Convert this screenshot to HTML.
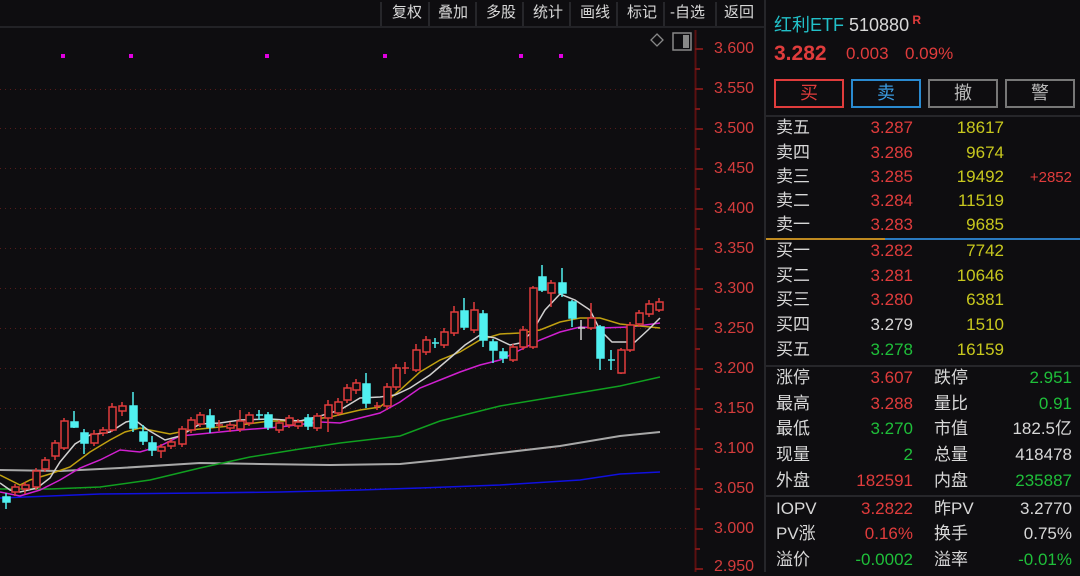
<!DOCTYPE html>
<html><head><meta charset="utf-8"><style>
*{margin:0;padding:0;box-sizing:border-box}
body{width:1080px;height:572px;background:#0e0d10;overflow:hidden;position:relative;font-family:"Liberation Sans","Noto Sans CJK SC",sans-serif;color:#d8d8d8}
.tb{position:absolute;top:0;left:0;width:764px;height:28px;border-bottom:2px solid #222226}
.tb span{position:absolute;top:4px;font-size:15px;line-height:18px;color:#d8d8d8}
.tb i{position:absolute;top:2px;width:2px;height:24px;background:#26262a}
.ax{position:absolute;left:714px;font-size:16px;line-height:18px;color:#d43c3c}
.rp{position:absolute;left:764px;top:0;width:316px;height:572px;border-left:2px solid #26262a}
.t{position:absolute;font-size:17px;line-height:20px;white-space:nowrap}
.r{color:#e03c3c}.g{color:#1fbf3a}.y{color:#c8c81e}.w{color:#d8d8d8}
.btn{position:absolute;top:79px;width:70px;height:29px;border:2px solid;font-size:18px;text-align:center;line-height:25px}
.hl{position:absolute;left:0;width:316px;height:2px;background:#26262a}
.ra{text-align:right}
</style></head><body>
<div class="tb">
<i style="left:380px"></i>
<span style="left:392px">复权</span><i style="left:428px"></i>
<span style="left:438px">叠加</span><i style="left:475px"></i>
<span style="left:486px">多股</span><i style="left:522px"></i>
<span style="left:533px">统计</span><i style="left:569px"></i>
<span style="left:580px">画线</span><i style="left:616px"></i>
<span style="left:627px">标记</span><i style="left:663px"></i>
<span style="left:670px">-自选</span><i style="left:715px"></i>
<span style="left:724px">返回</span>
</div>
<svg style="position:absolute;left:0;top:0" width="764" height="572">
<g stroke="#5a1a1a" stroke-width="1" stroke-dasharray="1,4">
<line x1="0" y1="89.5" x2="690" y2="89.5"/><line x1="0" y1="128.5" x2="690" y2="128.5"/><line x1="0" y1="168.5" x2="690" y2="168.5"/><line x1="0" y1="208.5" x2="690" y2="208.5"/><line x1="0" y1="248.5" x2="690" y2="248.5"/><line x1="0" y1="288.5" x2="690" y2="288.5"/><line x1="0" y1="328.5" x2="690" y2="328.5"/><line x1="0" y1="368.5" x2="690" y2="368.5"/><line x1="0" y1="408.5" x2="690" y2="408.5"/><line x1="0" y1="448.5" x2="690" y2="448.5"/><line x1="0" y1="488.5" x2="690" y2="488.5"/><line x1="0" y1="528.5" x2="690" y2="528.5"/>
</g>
<line x1="695.5" y1="30" x2="695.5" y2="572" stroke="#5a1010" stroke-width="2"/>
<g stroke="#7a1818" stroke-width="2">
<line x1="695" y1="49" x2="703" y2="49"/><line x1="695" y1="89" x2="703" y2="89"/><line x1="695" y1="129" x2="703" y2="129"/><line x1="695" y1="169" x2="703" y2="169"/><line x1="695" y1="209" x2="703" y2="209"/><line x1="695" y1="249" x2="703" y2="249"/><line x1="695" y1="289" x2="703" y2="289"/><line x1="695" y1="329" x2="703" y2="329"/><line x1="695" y1="369" x2="703" y2="369"/><line x1="695" y1="409" x2="703" y2="409"/><line x1="695" y1="449" x2="703" y2="449"/><line x1="695" y1="489" x2="703" y2="489"/><line x1="695" y1="529" x2="703" y2="529"/><line x1="695" y1="569" x2="703" y2="569"/>
<line x1="695" y1="69" x2="700" y2="69"/><line x1="695" y1="109" x2="700" y2="109"/><line x1="695" y1="149" x2="700" y2="149"/><line x1="695" y1="189" x2="700" y2="189"/><line x1="695" y1="229" x2="700" y2="229"/><line x1="695" y1="269" x2="700" y2="269"/><line x1="695" y1="309" x2="700" y2="309"/><line x1="695" y1="349" x2="700" y2="349"/><line x1="695" y1="389" x2="700" y2="389"/><line x1="695" y1="429" x2="700" y2="429"/><line x1="695" y1="469" x2="700" y2="469"/><line x1="695" y1="509" x2="700" y2="509"/><line x1="695" y1="549" x2="700" y2="549"/>
</g>
<g fill="#e000e0"><rect x="61" y="54" width="4" height="4"/><rect x="129" y="54" width="4" height="4"/><rect x="265" y="54" width="4" height="4"/><rect x="383" y="54" width="4" height="4"/><rect x="519" y="54" width="4" height="4"/><rect x="559" y="54" width="4" height="4"/></g>
<path d="M657 34 L663 40 L657 46 L651 40 Z" fill="none" stroke="#888" stroke-width="1.3"/>
<rect x="673" y="33" width="18" height="17" fill="none" stroke="#888" stroke-width="1.5"/><rect x="683" y="35" width="6" height="13" fill="#888"/>
<g fill="none" stroke-width="1.5">
<polyline stroke="#1010e0" points="0,498 50,496 100,494 200,493 280,492 360,490 420,488 500,485 580,480 620,474 660,472"/>
<polyline stroke="#a8a8a8" stroke-width="2" points="0,470 60,471 120,468 200,463 260,464 330,465 400,464 440,460 500,453 560,446 620,436 660,432"/>
<polyline stroke="#10a020" points="0,489 50,489 100,487 150,480 200,468 250,457 300,449 340,443 400,436 440,421 500,406 560,396 620,386 660,377"/>
<polyline stroke="#d020d0" points="0,492 20,496 40,490 60,480 80,468 100,460 120,450 140,452 160,446 180,436 200,434 240,430 280,427 320,422 340,423 360,418 380,413 400,402 420,388 440,380 460,372 480,365 500,360 520,350 540,340 560,332 580,327 600,328 630,327 660,323"/>
<polyline stroke="#c0a010" points="0,475 20,485 30,480 50,474 70,467 90,452 110,440 125,432 140,428 160,432 170,434 190,430 210,428 240,425 270,421 300,421 330,417 360,410 380,407 400,390 420,372 440,360 460,352 480,340 500,334 520,333 540,330 560,322 580,318 600,318 620,324 640,326 660,328"/>
<polyline stroke="#d0d0d0" points="0,483 10,490 20,492 37,488 50,478 60,462 75,444 90,435 110,432 126,422 135,420 148,430 165,440 180,436 200,424 220,423 240,420 270,419 300,421 320,416 340,410 360,398 380,397 395,395 410,388 430,375 450,358 465,345 480,335 495,338 510,345 520,343 532,332 545,310 560,294 575,300 590,310 600,330 612,342 635,342 648,330 660,318"/>
</g>
<g stroke="#e03c3c" stroke-width="1.5" fill="#0e0d10">
<line x1="15" y1="484" x2="15" y2="496"/><rect x="12" y="487" width="7" height="5"/>
<line x1="25" y1="482" x2="25" y2="494"/><rect x="22" y="485" width="7" height="4"/>
<line x1="36" y1="468" x2="36" y2="490"/><rect x="33" y="471" width="7" height="16"/>
<line x1="45" y1="457" x2="45" y2="472"/><rect x="42" y="460" width="7" height="9"/>
<line x1="55" y1="440" x2="55" y2="460"/><rect x="52" y="443" width="7" height="13"/>
<line x1="64" y1="418" x2="64" y2="450"/><rect x="61" y="421" width="7" height="27"/>
<line x1="94" y1="430" x2="94" y2="446"/><rect x="91" y="434" width="7" height="9"/>
<line x1="103" y1="427" x2="103" y2="436"/><rect x="100" y="430" width="7" height="3"/>
<line x1="112" y1="403" x2="112" y2="432"/><rect x="109" y="407" width="7" height="23"/>
<line x1="122" y1="402" x2="122" y2="416"/><rect x="119" y="406" width="7" height="5"/>
<line x1="161" y1="444" x2="161" y2="458"/><rect x="158" y="447" width="7" height="4"/>
<line x1="171" y1="439" x2="171" y2="449"/><rect x="168" y="442" width="7" height="4"/>
<line x1="182" y1="426" x2="182" y2="447"/><rect x="179" y="429" width="7" height="15"/>
<line x1="191" y1="417" x2="191" y2="433"/><rect x="188" y="420" width="7" height="10"/>
<line x1="200" y1="412" x2="200" y2="427"/><rect x="197" y="415" width="7" height="9"/>
<line x1="219" y1="420" x2="219" y2="431"/><line x1="216" y1="425" x2="223" y2="425"/>
<line x1="230" y1="422" x2="230" y2="432"/><rect x="227" y="425" width="7" height="3"/>
<line x1="240" y1="410" x2="240" y2="432"/><rect x="237" y="421" width="7" height="8"/>
<line x1="249" y1="412" x2="249" y2="426"/><rect x="246" y="415" width="7" height="8"/>
<line x1="279" y1="420" x2="279" y2="433"/><rect x="276" y="423" width="7" height="7"/>
<line x1="289" y1="415" x2="289" y2="428"/><rect x="286" y="418" width="7" height="7"/>
<line x1="298" y1="419" x2="298" y2="429"/><rect x="295" y="422" width="7" height="4"/>
<line x1="317" y1="413" x2="317" y2="431"/><rect x="314" y="416" width="7" height="12"/>
<line x1="328" y1="400" x2="328" y2="432"/><rect x="325" y="405" width="7" height="13"/>
<line x1="338" y1="398" x2="338" y2="416"/><rect x="335" y="402" width="7" height="11"/>
<line x1="347" y1="384" x2="347" y2="403"/><rect x="344" y="388" width="7" height="12"/>
<line x1="356" y1="379" x2="356" y2="394"/><rect x="353" y="383" width="7" height="7"/>
<line x1="377" y1="402" x2="377" y2="410"/><line x1="374" y1="406" x2="381" y2="406"/>
<line x1="387" y1="383" x2="387" y2="410"/><rect x="384" y="387" width="7" height="19"/>
<line x1="396" y1="364" x2="396" y2="390"/><rect x="393" y="368" width="7" height="19"/>
<line x1="405" y1="362" x2="405" y2="374"/><line x1="402" y1="368" x2="409" y2="368"/>
<line x1="416" y1="344" x2="416" y2="372"/><rect x="413" y="350" width="7" height="20"/>
<line x1="426" y1="336" x2="426" y2="355"/><rect x="423" y="340" width="7" height="12"/>
<line x1="444" y1="328" x2="444" y2="348"/><rect x="441" y="332" width="7" height="13"/>
<line x1="454" y1="306" x2="454" y2="336"/><rect x="451" y="312" width="7" height="21"/>
<line x1="474" y1="302" x2="474" y2="333"/><rect x="471" y="310" width="7" height="20"/>
<line x1="513" y1="344" x2="513" y2="362"/><rect x="510" y="347" width="7" height="13"/>
<line x1="523" y1="326" x2="523" y2="350"/><rect x="520" y="330" width="7" height="17"/>
<line x1="533" y1="286" x2="533" y2="349"/><rect x="530" y="288" width="7" height="59"/>
<line x1="551" y1="280" x2="551" y2="307"/><rect x="548" y="283" width="7" height="10"/>
<line x1="591" y1="303" x2="591" y2="330"/><rect x="588" y="318" width="7" height="10"/>
<line x1="621" y1="348" x2="621" y2="374"/><rect x="618" y="350" width="7" height="23"/>
<line x1="630" y1="322" x2="630" y2="352"/><rect x="627" y="325" width="7" height="25"/>
<line x1="639" y1="310" x2="639" y2="327"/><rect x="636" y="313" width="7" height="11"/>
<line x1="649" y1="300" x2="649" y2="317"/><rect x="646" y="304" width="7" height="10"/>
<line x1="659" y1="298" x2="659" y2="312"/><rect x="656" y="302" width="7" height="8"/>
</g>
<g stroke="#50f0f0" stroke-width="1.5" fill="#50f0f0">
<line x1="6" y1="493" x2="6" y2="509"/><rect x="3" y="497" width="7" height="5"/>
<line x1="74" y1="411" x2="74" y2="428"/><rect x="71" y="422" width="7" height="5"/>
<line x1="84" y1="429" x2="84" y2="454"/><rect x="81" y="433" width="7" height="10"/>
<line x1="133" y1="392" x2="133" y2="432"/><rect x="130" y="406" width="7" height="22"/>
<line x1="143" y1="425" x2="143" y2="445"/><rect x="140" y="432" width="7" height="9"/>
<line x1="152" y1="436" x2="152" y2="456"/><rect x="149" y="443" width="7" height="7"/>
<line x1="210" y1="409" x2="210" y2="433"/><rect x="207" y="416" width="7" height="11"/>
<line x1="259" y1="410" x2="259" y2="420"/><line x1="256" y1="415" x2="263" y2="415"/>
<line x1="268" y1="412" x2="268" y2="430"/><rect x="265" y="415" width="7" height="12"/>
<line x1="308" y1="414" x2="308" y2="430"/><rect x="305" y="418" width="7" height="8"/>
<line x1="366" y1="373" x2="366" y2="408"/><rect x="363" y="384" width="7" height="19"/>
<line x1="435" y1="338" x2="435" y2="348"/><line x1="432" y1="343" x2="439" y2="343"/>
<line x1="464" y1="298" x2="464" y2="330"/><rect x="461" y="311" width="7" height="16"/>
<line x1="483" y1="310" x2="483" y2="347"/><rect x="480" y="314" width="7" height="26"/>
<line x1="493" y1="339" x2="493" y2="363"/><rect x="490" y="342" width="7" height="8"/>
<line x1="503" y1="348" x2="503" y2="363"/><rect x="500" y="352" width="7" height="6"/>
<line x1="542" y1="265" x2="542" y2="292"/><rect x="539" y="277" width="7" height="13"/>
<line x1="562" y1="268" x2="562" y2="297"/><rect x="559" y="283" width="7" height="10"/>
<line x1="572" y1="300" x2="572" y2="327"/><rect x="569" y="302" width="7" height="16"/>
<line x1="581" y1="320" x2="581" y2="340" stroke="#d0d0d0"/><line x1="578" y1="328" x2="585" y2="328" stroke="#d0d0d0"/>
<line x1="600" y1="325" x2="600" y2="370"/><rect x="597" y="327" width="7" height="31"/>
<line x1="611" y1="350" x2="611" y2="370"/><line x1="608" y1="360" x2="615" y2="360"/>
</g>
</svg>
<div class="ax" style="top:40px">3.600</div><div class="ax" style="top:80px">3.550</div><div class="ax" style="top:120px">3.500</div><div class="ax" style="top:160px">3.450</div><div class="ax" style="top:200px">3.400</div><div class="ax" style="top:240px">3.350</div><div class="ax" style="top:280px">3.300</div><div class="ax" style="top:320px">3.250</div><div class="ax" style="top:360px">3.200</div><div class="ax" style="top:400px">3.150</div><div class="ax" style="top:440px">3.100</div><div class="ax" style="top:480px">3.050</div><div class="ax" style="top:520px">3.000</div><div class="ax" style="top:558px">2.950</div>

<div class="rp">
<div class="t" style="left:8px;top:9px;font-size:18px;line-height:22px"><span style="color:#22c0c8">红利ETF</span> <span class="w">510880</span><sup class="r" style="font-size:12px;font-weight:bold"> R</sup></div>
<div class="t r" style="left:8px;top:42px;font-size:21px;line-height:24px;font-weight:bold">3.282</div>
<div class="t r" style="left:80px;top:44px">0.003</div>
<div class="t r" style="left:139px;top:44px">0.09%</div>
<div class="btn" style="left:8px;border-color:#e03c3c;color:#e03c3c">买</div>
<div class="btn" style="left:85px;border-color:#2a8ad0;color:#3a9ae0">卖</div>
<div class="btn" style="left:162px;border-color:#777;color:#bbb">撤</div>
<div class="btn" style="left:239px;border-color:#777;color:#bbb">警</div>
<div class="hl" style="top:115px"></div>

<div class="t w" style="left:10px;top:118px">卖五</div><div class="t r ra" style="right:167px;top:118px">3.287</div><div class="t y ra" style="right:76px;top:118px">18617</div>
<div class="t w" style="left:10px;top:143px">卖四</div><div class="t r ra" style="right:167px;top:143px">3.286</div><div class="t y ra" style="right:76px;top:143px">9674</div>
<div class="t w" style="left:10px;top:167px">卖三</div><div class="t r ra" style="right:167px;top:167px">3.285</div><div class="t y ra" style="right:76px;top:167px">19492</div><div class="t r ra" style="right:8px;top:168px;font-size:15px">+2852</div>
<div class="t w" style="left:10px;top:191px">卖二</div><div class="t r ra" style="right:167px;top:191px">3.284</div><div class="t y ra" style="right:76px;top:191px">11519</div>
<div class="t w" style="left:10px;top:215px">卖一</div><div class="t r ra" style="right:167px;top:215px">3.283</div><div class="t y ra" style="right:76px;top:215px">9685</div>
<div style="position:absolute;left:0;top:238px;width:119px;height:2px;background:#c08a20"></div><div style="position:absolute;left:119px;top:238px;width:197px;height:2px;background:#2a7ac0"></div>
<div class="t w" style="left:10px;top:241px">买一</div><div class="t r ra" style="right:167px;top:241px">3.282</div><div class="t y ra" style="right:76px;top:241px">7742</div>
<div class="t w" style="left:10px;top:266px">买二</div><div class="t r ra" style="right:167px;top:266px">3.281</div><div class="t y ra" style="right:76px;top:266px">10646</div>
<div class="t w" style="left:10px;top:290px">买三</div><div class="t r ra" style="right:167px;top:290px">3.280</div><div class="t y ra" style="right:76px;top:290px">6381</div>
<div class="t w" style="left:10px;top:315px">买四</div><div class="t w ra" style="right:167px;top:315px">3.279</div><div class="t y ra" style="right:76px;top:315px">1510</div>
<div class="t w" style="left:10px;top:340px">买五</div><div class="t g ra" style="right:167px;top:340px">3.278</div><div class="t y ra" style="right:76px;top:340px">16159</div>
<div class="hl" style="top:365px"></div>

<div class="t w" style="left:10px;top:368px">涨停</div><div class="t r ra" style="right:167px;top:368px">3.607</div><div class="t w" style="left:168px;top:368px">跌停</div><div class="t g ra" style="right:8px;top:368px">2.951</div>
<div class="t w" style="left:10px;top:394px">最高</div><div class="t r ra" style="right:167px;top:394px">3.288</div><div class="t w" style="left:168px;top:394px">量比</div><div class="t g ra" style="right:8px;top:394px">0.91</div>
<div class="t w" style="left:10px;top:419px">最低</div><div class="t g ra" style="right:167px;top:419px">3.270</div><div class="t w" style="left:168px;top:419px">市值</div><div class="t w ra" style="right:8px;top:419px">182.5亿</div>
<div class="t w" style="left:10px;top:445px">现量</div><div class="t g ra" style="right:167px;top:445px">2</div><div class="t w" style="left:168px;top:445px">总量</div><div class="t w ra" style="right:8px;top:445px">418478</div>
<div class="t w" style="left:10px;top:471px">外盘</div><div class="t r ra" style="right:167px;top:471px">182591</div><div class="t w" style="left:168px;top:471px">内盘</div><div class="t g ra" style="right:8px;top:471px">235887</div>
<div class="hl" style="top:495px"></div>
<div class="t w" style="left:10px;top:499px">IOPV</div><div class="t r ra" style="right:167px;top:499px">3.2822</div><div class="t w" style="left:168px;top:499px">昨PV</div><div class="t w ra" style="right:8px;top:499px">3.2770</div>
<div class="t w" style="left:10px;top:524px">PV涨</div><div class="t r ra" style="right:167px;top:524px">0.16%</div><div class="t w" style="left:168px;top:524px">换手</div><div class="t w ra" style="right:8px;top:524px">0.75%</div>
<div class="t w" style="left:10px;top:550px">溢价</div><div class="t g ra" style="right:167px;top:550px">-0.0002</div><div class="t w" style="left:168px;top:550px">溢率</div><div class="t g ra" style="right:8px;top:550px">-0.01%</div>
</div>
</body></html>
